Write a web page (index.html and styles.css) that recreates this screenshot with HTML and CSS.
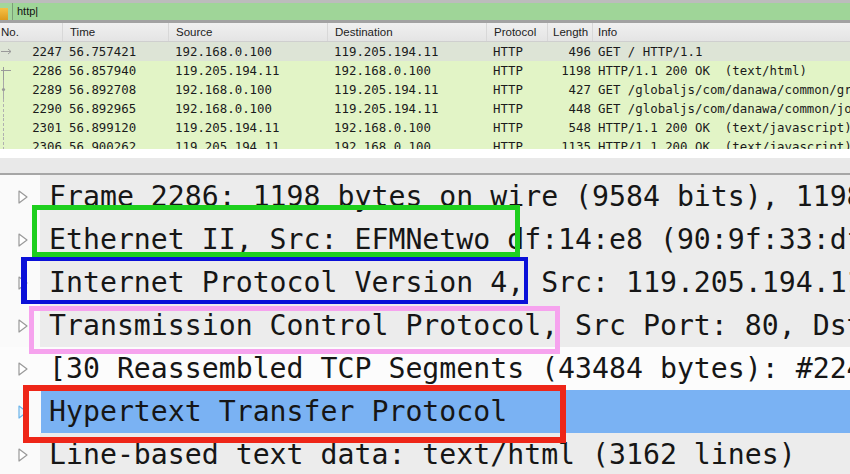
FILE: index.html
```html
<!DOCTYPE html>
<html>
<head>
<meta charset="utf-8">
<link rel="stylesheet" href="styles.css">
</head>
<body>
<div class="screen">
  <div class="filter">
    <span class="bookmark"></span>
    <div class="field">http|</div>
  </div>
  <div class="plist">
    <div class="prow phead">
      <div class="c no">No.</div>
      <div class="c">Time</div>
      <div class="c">Source</div>
      <div class="c">Destination</div>
      <div class="c">Protocol</div>
      <div class="c len">Length</div>
      <div class="c info">Info</div>
    </div>
    <div class="rows">
      <div class="prow data first">
        <div class="c no"><svg class="tree" width="14" height="19" viewBox="0 0 14 19"><path d="M1 9.5H11M8 7l3 2.5L8 12" fill="none" stroke="#9a9a9a" stroke-width="1"/></svg><span>2247</span></div>
        <div class="c">56.757421</div><div class="c">192.168.0.100</div><div class="c">119.205.194.11</div><div class="c">HTTP</div><div class="c len">496</div><div class="c info">GET / HTTP/1.1</div>
      </div>
      <div class="prow data">
        <div class="c no"><svg class="tree" width="14" height="19" viewBox="0 0 14 19"><path d="M3.5 6V19M1 9.5H11" fill="none" stroke="#9a9a9a" stroke-width="1"/></svg><span>2286</span></div>
        <div class="c">56.857940</div><div class="c">119.205.194.11</div><div class="c">192.168.0.100</div><div class="c">HTTP</div><div class="c len">1198</div><div class="c info">HTTP/1.1 200 OK&nbsp; (text/html)</div>
      </div>
      <div class="prow data">
        <div class="c no"><svg class="tree" width="14" height="19" viewBox="0 0 14 19"><path d="M3.5 0V19" fill="none" stroke="#a8a8a8" stroke-width="1"/><circle cx="3.5" cy="9.5" r="1.6" fill="#9a9a9a"/></svg><span>2289</span></div>
        <div class="c">56.892708</div><div class="c">192.168.0.100</div><div class="c">119.205.194.11</div><div class="c">HTTP</div><div class="c len">427</div><div class="c info">GET /globaljs/com/danawa/common/gr</div>
      </div>
      <div class="prow data">
        <div class="c no"><svg class="tree" width="14" height="19" viewBox="0 0 14 19"><path d="M3.5 0V19" fill="none" stroke="#b0b0b0" stroke-width="1" stroke-dasharray="3 2"/></svg><span>2290</span></div>
        <div class="c">56.892965</div><div class="c">192.168.0.100</div><div class="c">119.205.194.11</div><div class="c">HTTP</div><div class="c len">448</div><div class="c info">GET /globaljs/com/danawa/common/jo</div>
      </div>
      <div class="prow data">
        <div class="c no"><svg class="tree" width="14" height="19" viewBox="0 0 14 19"><path d="M3.5 0V19" fill="none" stroke="#b0b0b0" stroke-width="1" stroke-dasharray="3 2"/></svg><span>2301</span></div>
        <div class="c">56.899120</div><div class="c">119.205.194.11</div><div class="c">192.168.0.100</div><div class="c">HTTP</div><div class="c len">548</div><div class="c info">HTTP/1.1 200 OK&nbsp; (text/javascript)</div>
      </div>
      <div class="prow data">
        <div class="c no"><svg class="tree" width="14" height="19" viewBox="0 0 14 19"><path d="M3.5 0V19" fill="none" stroke="#b0b0b0" stroke-width="1" stroke-dasharray="3 2"/></svg><span>2306</span></div>
        <div class="c">56.900262</div><div class="c">119.205.194.11</div><div class="c">192.168.0.100</div><div class="c">HTTP</div><div class="c len">1135</div><div class="c info">HTTP/1.1 200 OK&nbsp; (text/javascript)</div>
      </div>
    </div>
  </div>
  <div class="gap"></div>
  <div class="splitter"></div>
  <div class="details">
    <div class="drow"><span class="tw"><svg class="tri" width="10" height="14" viewBox="0 0 10 14"><path d="M1 1L9 7L1 13Z" fill="#fff" stroke="#999" stroke-width="1.2" stroke-linejoin="round"/></svg></span><span class="dt">Frame 2286: 1198 bytes on wire (9584 bits), 1198 bytes captured</span></div>
    <div class="drow"><span class="tw"><svg class="tri" width="10" height="14" viewBox="0 0 10 14"><path d="M1 1L9 7L1 13Z" fill="#fff" stroke="#999" stroke-width="1.2" stroke-linejoin="round"/></svg></span><span class="dt">Ethernet II, Src: EFMNetwo_df:14:e8 (90:9f:33:df:14:e8)</span></div>
    <div class="drow"><span class="tw"><svg class="tri" width="10" height="14" viewBox="0 0 10 14"><path d="M1 1L9 7L1 13Z" fill="#fff" stroke="#999" stroke-width="1.2" stroke-linejoin="round"/></svg></span><span class="dt">Internet Protocol Version 4, Src: 119.205.194.11</span></div>
    <div class="drow"><span class="tw"><svg class="tri" width="10" height="14" viewBox="0 0 10 14"><path d="M1 1L9 7L1 13Z" fill="#fff" stroke="#999" stroke-width="1.2" stroke-linejoin="round"/></svg></span><span class="dt">Transmission Control Protocol, Src Port: 80, Dst Port</span></div>
    <div class="drow white"><span class="tw"><svg class="tri" width="10" height="14" viewBox="0 0 10 14"><path d="M1 1L9 7L1 13Z" fill="#fff" stroke="#999" stroke-width="1.2" stroke-linejoin="round"/></svg></span><span class="dt">[30 Reassembled TCP Segments (43484 bytes): #2247</span></div>
    <div class="drow sel"><span class="tw"><svg class="tri" width="10" height="14" viewBox="0 0 10 14"><path d="M1 1L9 7L1 13Z" fill="#e6f2fc" stroke="#6cb4ea" stroke-width="1.2" stroke-linejoin="round"/></svg></span><span class="dt">Hypertext Transfer Protocol</span></div>
    <div class="drow"><span class="tw"><svg class="tri" width="10" height="14" viewBox="0 0 10 14"><path d="M1 1L9 7L1 13Z" fill="#fff" stroke="#999" stroke-width="1.2" stroke-linejoin="round"/></svg></span><span class="dt">Line-based text data: text/html (3162 lines)</span></div>
  </div>
  <div class="box box-green"></div>
  <div class="box box-blue"></div>
  <div class="box box-pink"></div>
  <div class="box box-red"></div>
</div>
</body>
</html>
```
FILE: styles.css
```css
html, body {
  margin: 0;
  padding: 0;
  background: #ffffff;
}
.screen {
  position: relative;
  width: 850px;
  height: 474px;
  overflow: hidden;
  background: #ffffff;
}
.filter {
  height: 17px;
  border-top: 3px solid #bcbcbc;
  border-bottom: 3px solid #a2a2a2;
  background: #a3d69c;
  display: flex;
  align-items: stretch;
}
.bookmark {
  width: 8px;
  margin-top: 5px;
  height: 12px;
  background: linear-gradient(#f6c043, #dc9a1c);
  flex: none;
}
.field {
  margin-left: 4px;
  border-left: 1px solid #7c9e78;
  padding-left: 4px;
  flex: 1;
  font-family: "Liberation Sans", Arial, sans-serif;
  font-size: 11px;
  line-height: 17px;
  color: #111;
  background: #9fd598;
}
.plist {
  height: 126px;
  overflow: hidden;
}
.prow {
  display: grid;
  grid-template-columns: 63px 106px 159px 159px 61px 45px 1fr;
  height: 19px;
  align-items: center;
  white-space: nowrap;
}
.phead {
  height: 18px;
  background: linear-gradient(#f0f0f0, #e4e4e4);
  border-bottom: 1px solid #cfcfcf;
  font-family: "Liberation Sans", Arial, sans-serif;
  font-size: 11.5px;
  color: #222;
}
.phead .c {
  padding-left: 7px;
  height: 18px;
  line-height: 18px;
  border-right: 1px solid #d8d8d8;
}
.phead .c.no { padding-left: 1px; }
.phead .c.len { padding-left: 5px; text-align: left; padding-right: 0; }
.phead .c.info { padding-left: 5px; border-right: none; }
.rows {
  height: 107px;
  overflow: hidden;
}
.data {
  background: #e2f4c6;
  font-family: "DejaVu Sans Mono", "Liberation Mono", monospace;
  font-size: 12.4px;
  color: #1b1b1b;
}
.data.first {
  background: #dde4d6;
}
.data .c {
  padding-left: 6px;
  overflow: hidden;
}
.data .c.no {
  padding-left: 0;
  padding-right: 1px;
  display: flex;
  justify-content: space-between;
  align-items: center;
}
.tree { display: block; }
.data .c.len {
  text-align: right;
  padding-right: 2px;
}
.data .c.info { padding-left: 5px; }
.gap {
  height: 9px;
  background: #ffffff;
}
.splitter {
  height: 15px;
  background: #e9e9e9;
  border-bottom: 2px solid #a6a6a6;
}
.details {
  font-family: "DejaVu Sans Mono", "Liberation Mono", monospace;
  font-size: 28.2px;
  color: #161616;
}
.drow {
  height: 43px;
  display: flex;
  align-items: center;
  white-space: nowrap;
  background: linear-gradient(to right, #fafafa 0, #fafafa 40px, #ececec 40px);
}
.drow.white {
  background: #fcfcfc;
}
.drow.sel {
  background: linear-gradient(to right, #fafafa 0, #fafafa 41px, #7ab2f3 41px);
}
.tw {
  width: 49px;
  flex: none;
  display: flex;
  padding-left: 18px;
  box-sizing: border-box;
}
.tri { display: block; }
.dt {
  line-height: 43px;
}
.box {
  position: absolute;
  box-sizing: border-box;
  pointer-events: none;
}
.box-green {
  left: 32px;
  top: 205px;
  width: 488px;
  height: 52px;
  border: 5px solid #1ecf1e;
}
.box-blue {
  left: 21px;
  top: 257px;
  width: 507px;
  height: 47px;
  border: 4px solid #0a10d8;
  border-left-width: 6px;
}
.box-pink {
  left: 29px;
  top: 306px;
  width: 531px;
  height: 48px;
  border: 5px solid #f6a3ee;
}
.box-red {
  left: 23px;
  top: 385px;
  width: 543px;
  height: 58px;
  border: 6px solid #ee2618;
}
```
